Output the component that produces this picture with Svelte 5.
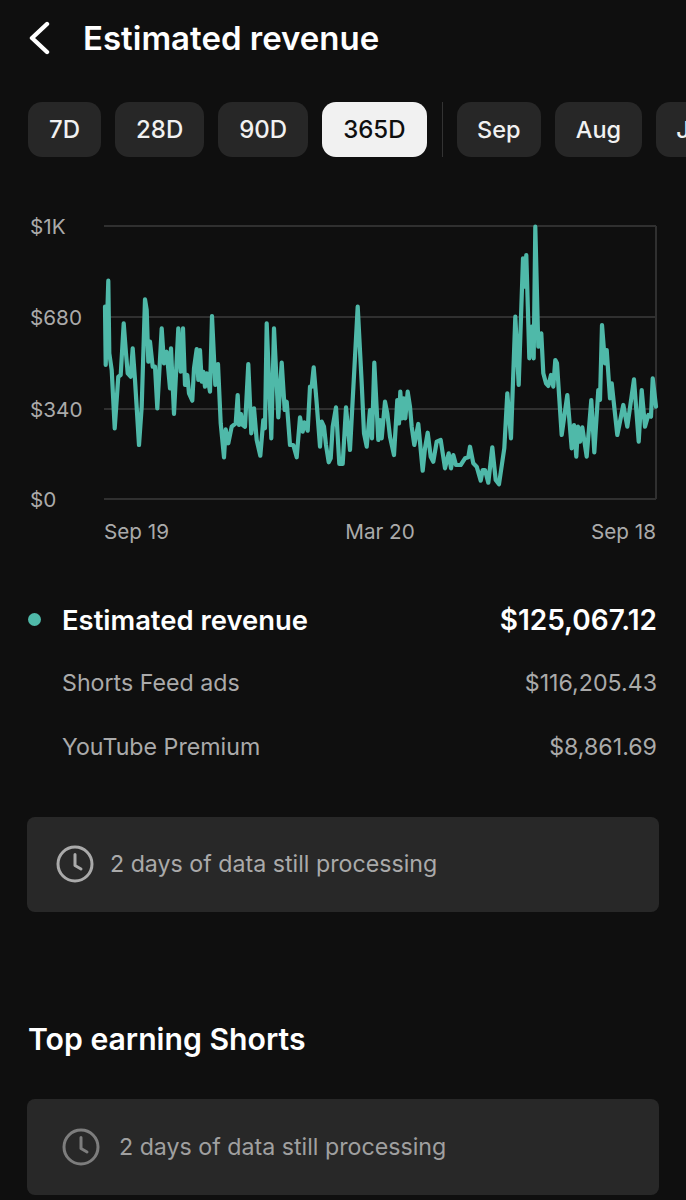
<script>
  const ranges = [
    { label: '7D' },
    { label: '28D' },
    { label: '90D' },
    { label: '365D', active: true }
  ];
  const months = ['Sep', 'Aug', 'Jul'];

  const rows = [
    { label: 'Shorts Feed ads', value: '$116,205.43' },
    { label: 'YouTube Premium', value: '$8,861.69' }
  ];

  const yAxis = [
    { label: '$1K', y: 226 },
    { label: '$680', y: 317 },
    { label: '$340', y: 409 },
    { label: '$0', y: 499 }
  ];

  // traced from the reference, x then y, in two runs
  const left = [45,290,47,465,55,212,58,430,65,480,74,655,85,500,92,495,101,340,108,430,113,490,122,500,128,415,135,510,147,705,155,590,165,268,170,300,175,455,180,395,188,470,195,470,202,595,215,355,222,460,230,425,240,535,243,415,252,612,265,355,272,485,279,355,285,525,292,495,297,550,307,572,312,475,320,417,325,510,330,420,335,515,340,485,345,530,350,490,360,545,366,318,376,525,384,462,392,640,402,742,407,658,415,700,425,650,437,640,443,555,447,645,453,612,458,645,465,650,475,462,484,670,492,595,500,690,511,737,520,630,525,655,530,340,544,685,552,355,565,622,575,458,584,600,590,575,600,705,610,705,620,742,630,622,638,665,643,637,653,662,660,530,665,530,671,472,680,580,690,710,695,635,702,650,708,705,716,757,722,745,728,650,738,592,748,762,758,762,768,592,780,720,803,290,815,520,822,670,830,710,840,600,846,685,853,458];
  const right = [25,690,30,630,35,685,45,575,52,610,60,680,72,735,82,570,87,640,91,545,96,625,101,565,106,625,113,545,120,590,125,650,133,705,145,642,158,782,165,715,173,668,182,740,190,755,200,695,212,690,225,775,236,730,243,775,250,735,258,765,272,765,285,745,295,742,300,710,310,760,320,770,332,812,338,780,345,780,355,818,367,712,377,810,387,823,403,715,412,550,423,685,436,320,446,525,459,145,463,230,469,135,478,445,485,350,491,445,496,50,505,410,514,370,520,490,528,520,535,528,543,495,550,530,556,450,561,460,575,675,592,555,605,715,612,645,619,740,624,650,630,695,637,652,650,740,664,570,673,727,685,540,690,570,696,345,705,460,710,420,720,565,725,520,742,675,760,585,772,650,792,508,806,695,815,540,825,650,835,615,843,620,848,505,858,590];

  function toPoints(list, originX) {
    const out = [];
    for (let i = 0; i < list.length; i += 2) {
      const x = originX + list[i] / 3;
      const y = 210 + list[i + 1] / 3 - 200;
      out.push(x.toFixed(1) + ',' + y.toFixed(1));
    }
    return out;
  }

  const line = [...toPoints(left, 90), ...toPoints(right, 370)].join(' ');
</script>

{#snippet notice(dim)}
  <div class="notice" class:dim>
    <svg class="clock" viewBox="0 0 38 38" width="38" height="38" fill="none" stroke="currentColor" stroke-width="3" stroke-linecap="round" stroke-linejoin="round">
      <circle cx="19" cy="19" r="17" />
      <path d="M19 9.5V20.5L25 24" />
    </svg>
    <span>2 days of data still processing</span>
  </div>
{/snippet}

<main class="page">
  <header class="top">
    <svg class="back" viewBox="0 0 22 34" width="22" height="34" fill="none" stroke="#fff" stroke-width="4.4" stroke-linecap="round" stroke-linejoin="round">
      <path d="M19 3L4 17L19 31" />
    </svg>
    <h1>Estimated revenue</h1>
  </header>

  <div class="filters">
    {#each ranges as r}
      <button class="pill range" class:active={r.active}>{r.label}</button>
    {/each}
    <div class="sep"></div>
    {#each months as m}
      <button class="pill">{m}</button>
    {/each}
  </div>

  <svg class="chart" viewBox="0 10 686 340" width="686" height="340">
    {#each yAxis as t}
      <line x1="104" x2="656" y1={t.y - 200} y2={t.y - 200} class="grid" />
      <text x="30" y={t.y - 200 + 8} class="tick">{t.label}</text>
    {/each}
    <line x1="656" x2="656" y1="26" y2="299" class="grid" />
    <polyline points={line} class="series" />
    <text x="104" y="339" class="tick">Sep 19</text>
    <text x="380" y="339" class="tick" text-anchor="middle">Mar 20</text>
    <text x="656" y="339" class="tick" text-anchor="end">Sep 18</text>
  </svg>

  <section class="totals">
    <div class="row main">
      <span class="dot"></span>
      <span class="name">Estimated revenue</span>
      <span class="value">$125,067.12</span>
    </div>
    {#each rows as row}
      <div class="row">
        <span class="name">{row.label}</span>
        <span class="value">{row.value}</span>
      </div>
    {/each}
  </section>

  {@render notice(false)}

  <h2>Top earning Shorts</h2>

  {@render notice(true)}
</main>

<style>
  :global(body) {
    background: #0f0f0f;
  }

  .page {
    height: 1200px;
    overflow: hidden;
    background: #0f0f0f;
    font-family: Inter, "Liberation Sans", sans-serif;
    color: #fff;
  }

  .top {
    display: flex;
    align-items: center;
    gap: 33px;
    height: 76px;
    padding-left: 28px;
  }

  .back {
    flex: none;
  }

  h1 {
    margin: 0;
    font-size: 33px;
    font-weight: 600;
  }

  .filters {
    display: flex;
    align-items: center;
    gap: 14px;
    height: 55px;
    margin-top: 26px;
    padding-left: 28px;
    overflow: hidden;
  }

  .pill {
    flex: none;
    height: 55px;
    padding: 0 20.6px;
    border: none;
    border-radius: 14px;
    background: #272727;
    color: #f1f1f1;
    font-family: inherit;
    font-size: 23.5px;
    font-weight: 500;
  }

  .pill.range {
    padding: 0 21px;
    font-size: 24px;
  }

  .pill.active {
    background: #f1f1f1;
    color: #0f0f0f;
  }

  .sep {
    flex: none;
    width: 1px;
    height: 55px;
    margin-left: 1px;
    background: #333;
  }

  .chart {
    display: block;
    margin-top: 53px;
  }

  .grid {
    stroke: #303030;
    stroke-width: 2;
  }

  .tick {
    fill: #aaa;
    font-size: 20.7px;
  }

  .series {
    fill: none;
    stroke: #4fb9a9;
    stroke-width: 4.2;
    stroke-linejoin: round;
    stroke-linecap: round;
  }

  .totals {
    margin-top: 38px;
    padding: 0 29px 0 28px;
  }

  .row {
    display: flex;
    align-items: center;
    justify-content: space-between;
    height: 63.5px;
    padding-left: 34px;
    font-size: 23.2px;
    color: #aaa;
  }

  .row.main {
    padding-left: 0;
    justify-content: flex-start;
    font-weight: 600;
    font-size: 27.4px;
    color: #fff;
  }

  .dot {
    width: 13px;
    height: 13px;
    margin-right: 21px;
    border-radius: 50%;
    background: #4fb9a9;
  }

  .main .value {
    margin-left: auto;
    font-size: 28px;
  }

  .notice {
    display: flex;
    align-items: center;
    gap: 16px;
    height: 95px;
    margin: 38px 27px 0;
    padding-left: 29px;
    border-radius: 8px;
    background: #282828;
    color: #aaa;
    font-size: 23.2px;
  }

  .clock {
    flex: none;
  }

  .notice.dim {
    height: 96px;
    margin-top: 42px;
    padding-left: 35px;
    gap: 19px;
    color: #a0a0a0;
  }

  .notice.dim .clock {
    color: #7d7d7d;
  }

  h2 {
    margin: 109px 28px 0;
    font-size: 30.2px;
    font-weight: 600;
    line-height: 36px;
  }
</style>
